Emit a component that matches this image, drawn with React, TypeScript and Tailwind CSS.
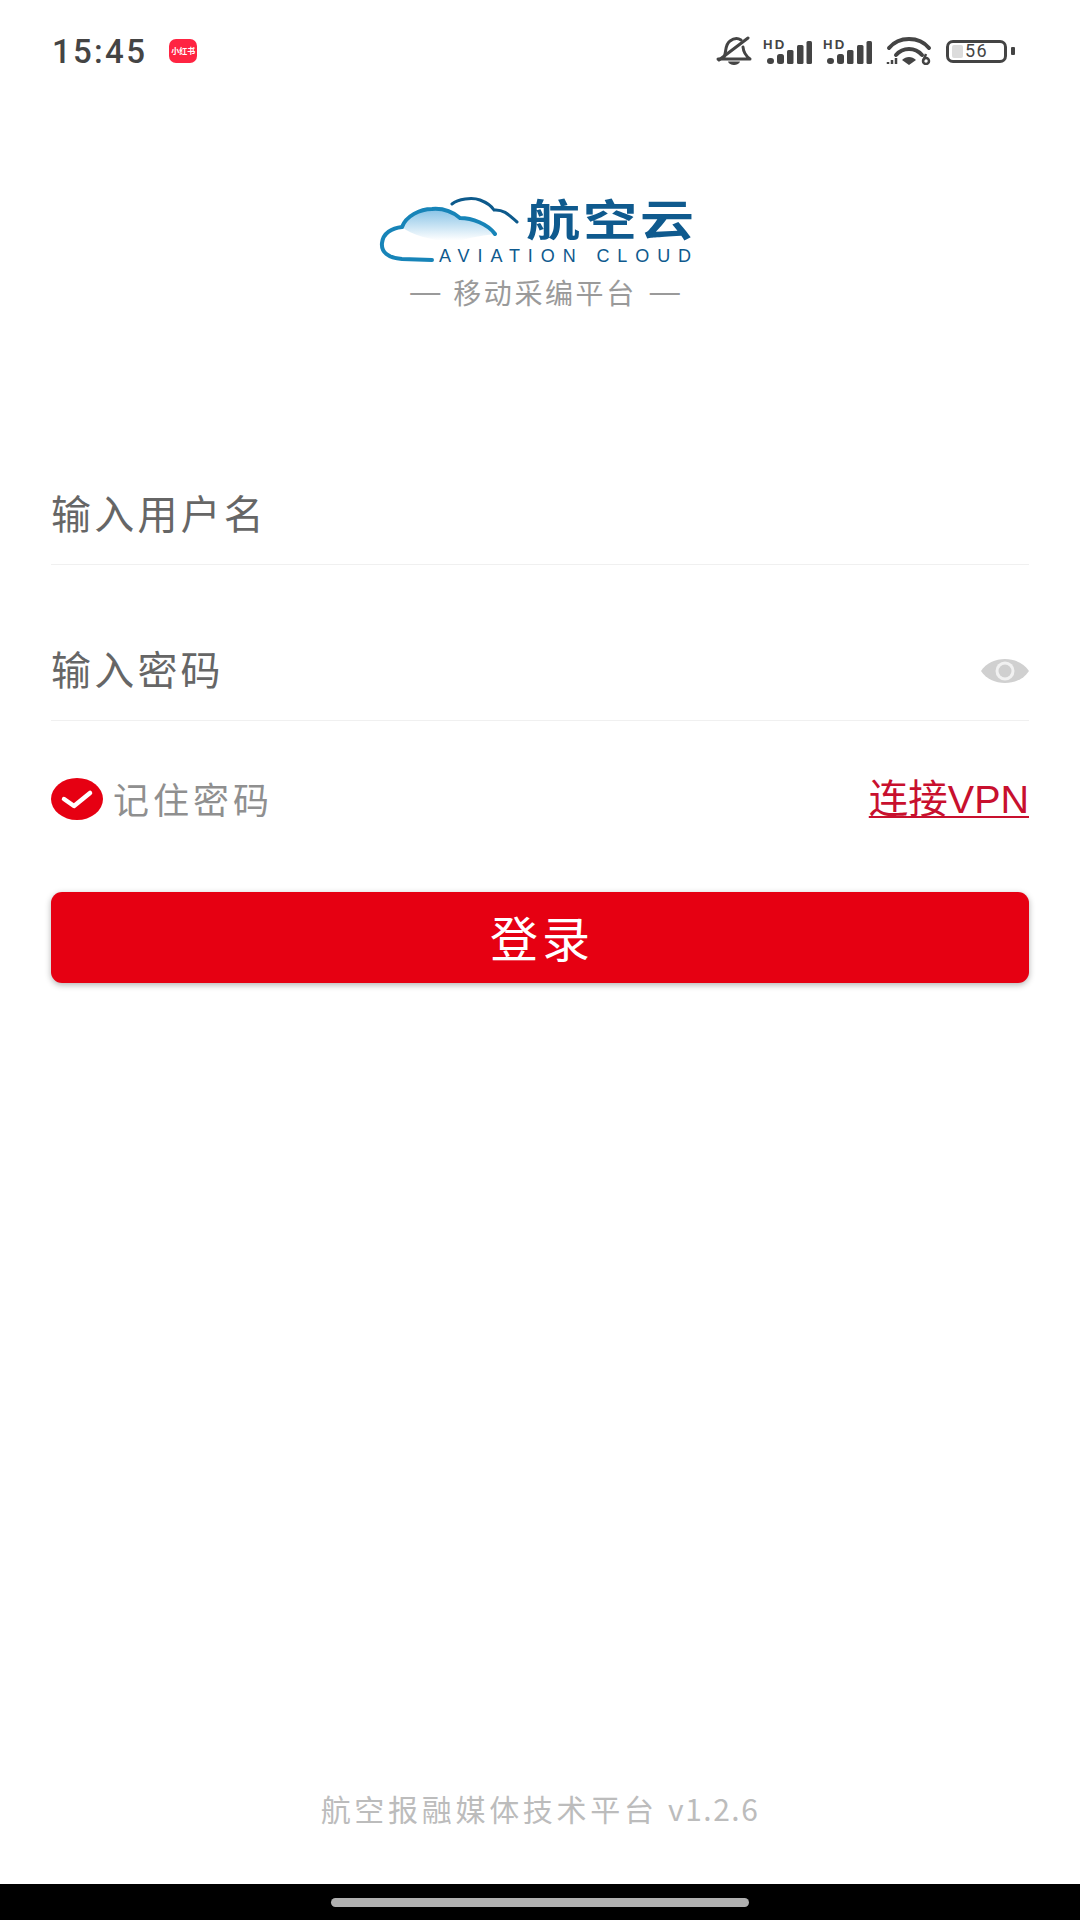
import React from "react";

const CJK = "font-['Noto_Sans_CJK_SC','Noto_Sans',sans-serif]";

function Bars() {
  return (
    <span className="relative block w-[47px] h-[28px]">
      <span className="absolute left-[-2px] top-[2px] text-[12px] leading-[12px] font-bold text-[#444] font-['Liberation_Sans',sans-serif] tracking-[2px] scale-x-110 origin-left">HD</span>
      <svg width="47" height="28" viewBox="0 0 47 28" className="absolute left-0 top-0">
        <g fill="#444">
          <rect x="2" y="21" width="7" height="6" rx="3" />
          <rect x="12" y="17" width="7" height="10" rx="2.500" />
          <rect x="22" y="13" width="6.500" height="14" rx="1.500" />
          <rect x="32" y="8" width="6.500" height="19" rx="1.500" />
          <rect x="41.500" y="4" width="5.500" height="23" rx="1.500" />
        </g>
      </svg>
    </span>
  );
}

function StatusBar() {
  return (
    <div className="h-[102px] pl-[52px] pr-[65px] flex items-center justify-between shrink-0">
      <div className="flex items-center gap-[22px]">
        <span className="text-[33px] leading-none font-medium tracking-[2.300px] text-[#444] font-['Roboto',sans-serif]">15:45</span>
        <span className={`w-[28px] h-[24px] rounded-[7px] bg-[#ff2442] flex items-center justify-center text-white text-[8px] leading-none font-bold whitespace-nowrap ${CJK}`}>小红书</span>
      </div>
      <div className="flex items-center">
        <svg width="36" height="30" viewBox="0 0 36 30" className="mr-[13px]">
          <g fill="none" stroke="#444" strokeWidth="3" strokeLinecap="round" strokeLinejoin="round">
            <path d="M2 23 H34 C30 20 27.500 17 27 11 M7 23 C11 18 8 9 14 5 C18 2 22 2 25 4" />
            <path d="M3 24 L32 2" />
          </g>
          <path d="M12 25.500 H24 C23 30 13 30 12 25.500 Z" fill="#444" />
        </svg>
        <Bars />
        <span className="w-[13px]" />
        <Bars />
        <svg width="46" height="28" viewBox="0 0 46 28" className="ml-[14px] mr-[14px]">
          <g fill="none" stroke="#444" strokeLinecap="round">
            <path d="M3 11 C13 -1 33 -1 43 11" strokeWidth="4" />
            <path d="M10 18 C17 10 29 10 36 18" strokeWidth="4" />
          </g>
          <path d="M16 23 C20 19 26 19 30 23 L23 28 Z" fill="#444" />
          <path d="M2 27 V25 M6 27 V23 M10 27 V21" stroke="#444" strokeWidth="2.500" />
          <circle cx="40" cy="24" r="3" fill="none" stroke="#444" strokeWidth="2.500" />
          <path d="M37.500 23 L40 17" stroke="#444" strokeWidth="2.500" />
        </svg>
        <div className="relative w-[61px] h-[23px] rounded-[7px] border-[3px] border-[#444] flex items-center justify-center overflow-hidden">
          <span className="absolute left-[3px] top-[2px] bottom-[2px] w-[11px] bg-[#dcdcdc] rounded-[2px]" />
          <span className="relative text-[18px] leading-none tracking-[1.500px] text-[#444] font-['Roboto',sans-serif]">56</span>
        </div>
        <span className="ml-[4px] w-[4px] h-[8px] rounded-[1px] bg-[#444]" />
      </div>
    </div>
  );
}

function Logo() {
  return (
    <div className="flex flex-col items-center mt-[98px] mr-[8px]">
      <div className="relative w-[312px] h-[72px]">
        <svg width="140" height="64" viewBox="0 0 140 64" className="absolute left-0 top-0 overflow-visible">
          <defs>
            <linearGradient id="cg" x1="0" y1="0" x2="0" y2="1">
              <stop offset="0" stopColor="#86c2e6" />
              <stop offset="0.9" stopColor="#ffffff" />
            </linearGradient>
          </defs>
          <path d="M22 27 C26 16 40 9 52 9 C64 8 74 13 80 18 C92 18 108 24 115 34 C100 36 85 38 70 44 C50 38 32 36 22 27 Z" fill="url(#cg)" />
          <path d="M52 60 L22 59 C8 58 1 52 2 43 C3 33 12 28 22 27 C26 16 40 9 52 9 C64 8 74 13 80 18 C92 18 108 24 115 34" fill="none" stroke="#1784b8" strokeWidth="4" strokeLinecap="round" />
          <path d="M72 4 C78 -1 92 -3 100 0 C108 3 112 7 114 10 C124 9 130 16 137 22" fill="none" stroke="#0d5a8c" strokeWidth="3" strokeLinecap="round" />
        </svg>
        <span className={`absolute left-[146px] top-[-18px] text-[54px] leading-[72px] font-bold tracking-[3px] scale-y-[0.8] text-[#0f5a8e] whitespace-nowrap ${CJK}`}>航空云</span>
        <span className="absolute left-[59px] top-[45px] text-[18px] leading-[22px] tracking-[7.900px] text-[#0f5a8e] whitespace-nowrap font-['Liberation_Sans',sans-serif]">AVIATION CLOUD</span>
      </div>
      <div className={`mt-[3px] ml-[18px] flex items-center gap-[13px] text-[28px] leading-[34px] text-[#9a9a9a] whitespace-nowrap tracking-[2.600px] ${CJK}`}>
        <span className="font-['Liberation_Sans',sans-serif] text-[30px] tracking-normal">—</span>
        <span>移动采编平台</span>
        <span className="font-['Liberation_Sans',sans-serif] text-[30px] tracking-normal">—</span>
      </div>
    </div>
  );
}

function Field({ label, eye }: { label: string; eye?: boolean }) {
  return (
    <div className="h-[156px] border-b border-[#f0f0f0] flex items-end justify-between pb-[27px]">
      <span className={`text-[40px] leading-[50px] tracking-[3.200px] text-[#666] ${CJK}`}>{label}</span>
      {eye && (
        <svg width="48" height="24" viewBox="0 0 48 24" className="mb-[10px]">
          <path d="M0 12 C10 -4 38 -4 48 12 C38 28 10 28 0 12 Z" fill="#d0d0d0" />
          <circle cx="24" cy="12" r="9.500" fill="#f1f1f1" />
          <circle cx="24" cy="12" r="6.500" fill="#cfcfcf" />
        </svg>
      )}
    </div>
  );
}

export default function App() {
  return (
    <div className="w-[1080px] h-[1920px] bg-white flex flex-col overflow-hidden">
      <StatusBar />
      <Logo />
      <div className="px-[51px] mt-[100px] flex flex-col">
        <Field label="输入用户名" />
        <Field label="输入密码" eye />
        <div className="flex items-center justify-between mt-[56px] h-[44px]">
          <div className="flex items-center gap-[10px]">
            <svg width="52" height="42" viewBox="0 0 52 42">
              <ellipse cx="26" cy="21" rx="26" ry="21" fill="#e60012" />
              <path d="M13 21 L23 28 L39 15" fill="none" stroke="#fff" strokeWidth="4.500" strokeLinecap="round" strokeLinejoin="round" />
            </svg>
            <span className="mb-[3px] text-[36px] leading-[44px] tracking-[4px] text-[#8f8f8f] font-['Noto_Sans_CJK_SC',sans-serif]">记住密码</span>
          </div>
          <span className="text-[39.500px] leading-[44px] text-[#c8102e] underline underline-offset-[3px] decoration-2 font-['Liberation_Sans','Noto_Sans_CJK_SC',sans-serif]">连接VPN</span>
        </div>
        <button className={`mt-[71px] h-[91px] pl-[4px] pb-[4px] rounded-[11px] bg-[#e60012] shadow-[0_2px_6px_rgba(0,0,0,0.3)] text-white text-[48px] tracking-[4px] ${CJK}`}>登录</button>
      </div>
      <div className={`mt-auto mb-[56px] text-center text-[30px] leading-[40px] tracking-[3.700px] text-[#bcbcbc] ${CJK}`}>
        航空报融媒体技术平台 <span className="tracking-[1.500px]">v1.2.6</span>
      </div>
      <div className="h-[36px] bg-black flex items-center justify-center shrink-0">
        <span className="w-[418px] h-[9px] rounded-full bg-[#b0b0b0]" />
      </div>
    </div>
  );
}
